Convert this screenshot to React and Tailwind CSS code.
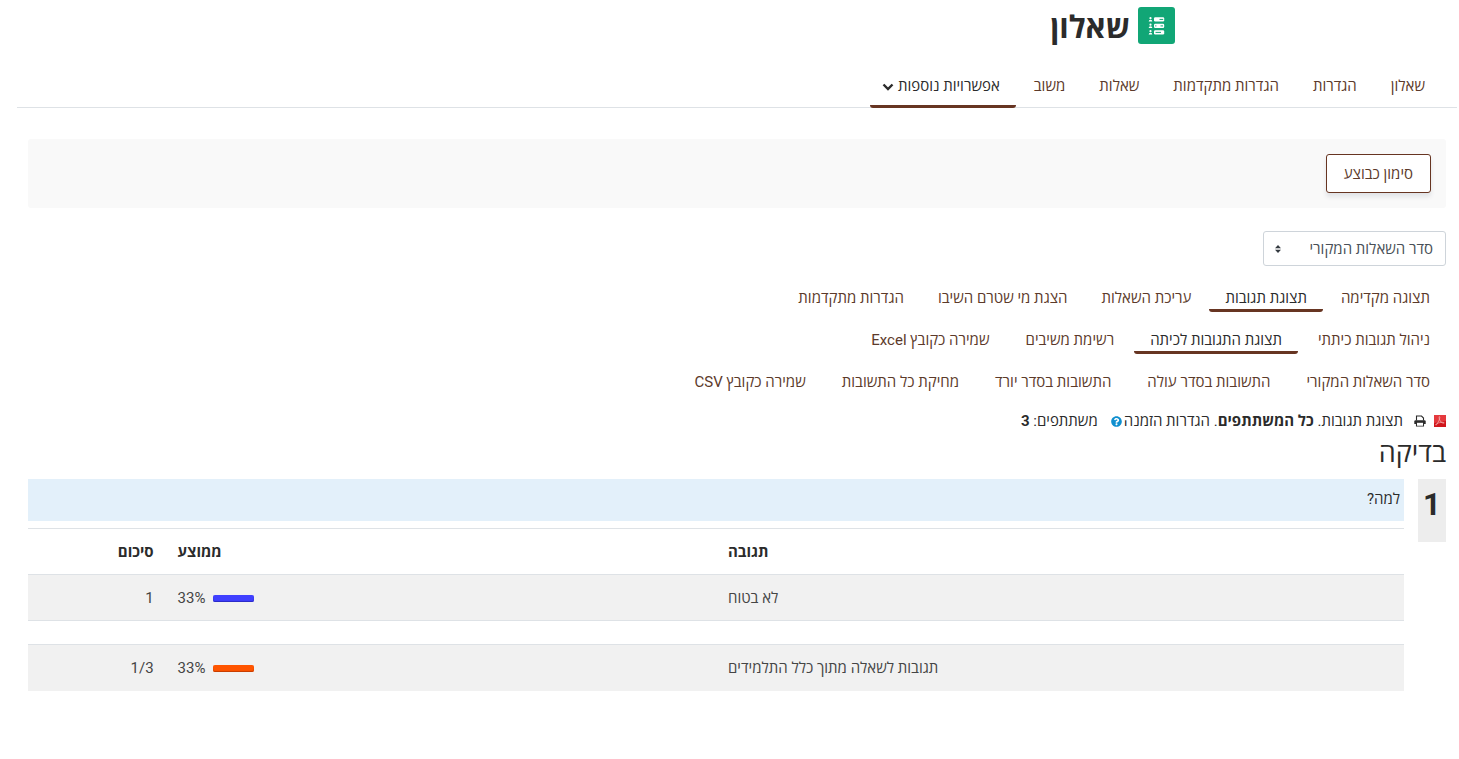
import { FaQuestionCircle } from "react-icons/fa"

const mainTabs = ["שאלון", "הגדרות", "הגדרות מתקדמות", "שאלות", "משוב", "אפשרויות נוספות"]

const subTabs = [
  {
    active: 1,
    gap: "gap-x-0.5",
    items: ["תצוגה מקדימה", "תצוגת תגובות", "עריכת השאלות", "הצגת מי שטרם השיבו", "הגדרות מתקדמות"],
  },
  {
    active: 1,
    gap: "gap-x-1",
    items: ["ניהול תגובות כיתתי", "תצוגת התגובות לכיתה", "רשימת משיבים", "שמירה כקובץ Excel"],
  },
  {
    active: -1,
    gap: "gap-x-1",
    items: [
      "סדר השאלות המקורי",
      "התשובות בסדר עולה",
      "התשובות בסדר יורד",
      "מחיקת כל התשובות",
      "שמירה כקובץ CSV",
    ],
  },
]

function SurveyIcon() {
  return (
    <svg viewBox="0 0 37 37" className="h-[37px] w-[37px] rounded-[3px] bg-[#11a676]" aria-hidden="true">
      {[10, 16.5, 23].map((y) => (
        <g key={y} fill="#fff">
          <circle cx="12.5" cy={y + 1.2} r="1.1" />
          <path d={`M10.7 ${y + 4.6}q0-1.9 1.8-1.9t1.8 1.9z`} />
          <rect x="16" y={y + 0.3} width="10.2" height="4.2" rx="1.2" />
        </g>
      ))}
      <path d="M21.5 12.4h3.7M17.2 18.9h1.2M22.5 18.9h2.5M17.5 25.4h5.5" stroke="#11a676" strokeWidth="1" />
    </svg>
  )
}

function PdfIcon() {
  return (
    <svg viewBox="0 0 12 12" className="h-3 w-3" aria-hidden="true">
      <rect width="12" height="12" fill="#d0161c" />
      <path d="M0 0h12v6L0 8z" fill="#e5393d" />
      <path
        d="M5.3 1.5c1.2 0 .2 4-2.8 8.3-.9.8-1.3-.2.3-1.2 2.2-1.1 6.5-1.8 7.4-.8.4 1-3.3.3-4.5-2.7-.4-1.3-.9-3.4-.4-3.6z"
        fill="none"
        stroke="#f7c4c4"
        strokeWidth=".6"
      />
    </svg>
  )
}

function PrintIcon() {
  return (
    <svg viewBox="0 0 12 12" className="h-3 w-3" aria-hidden="true">
      <path d="M2.5 5.500V1h5l2 2v2.500M2.500 8v3h7V8" fill="none" stroke="#2b2b2b" strokeWidth="1.1" />
      <path d="M1.500 5.200h9q1.200 0 1.200 1.200V9H.3V6.400Q.3 5.200 1.500 5.200z" fill="#2b2b2b" />
      <path d="M3 7.800h6v2.700H3z" fill="#fff" />
    </svg>
  )
}

function ChevronIcon() {
  return (
    <svg viewBox="0 0 12 8" className="mt-0.5 h-2 w-3" aria-hidden="true">
      <path d="M1.500 1.500L6 6l4.500-4.500" fill="none" stroke="#2b2b2b" strokeWidth="2.400" />
    </svg>
  )
}

function SortArrows() {
  return (
    <svg viewBox="0 0 6 8" className="h-2 w-1.5" aria-hidden="true">
      <path d="M3 0l3 3.300H0zM3 8L0 4.700h6z" fill="#343a40" />
    </svg>
  )
}

function Bar({ className }) {
  return <span className={`inline-block h-[7px] w-[41px] rounded-[2px] align-middle ${className}`} />
}

function SubNav({ items, active, gap }) {
  return (
    <ul className={`flex flex-wrap ${gap}`}>
      {items.map((item, i) => (
        <li key={item}>
          <a
            href="#"
            className={`block h-[34px] rounded-[3px] border-b-[3px] px-4 pt-[9px] leading-[22px] whitespace-nowrap ${
              i === active ? "border-[#673522] text-[#2b2b2b]" : "border-transparent text-[#5c3a2a]"
            }`}
          >
            {item}
          </a>
        </li>
      ))}
    </ul>
  )
}

function App() {
  return (
    <div
      dir="rtl"
      className="bg-white font-[Roboto,'Open_Sans','Noto_Sans',sans-serif] text-[15px] leading-[22px] text-[#2b2b2b]"
    >
      <header className="flex items-center gap-2 pt-[7px] pr-71">
        <SurveyIcon />
        <h1 className="pt-1 text-[31px] leading-[33px] font-bold">שאלון</h1>
      </header>

      <nav className="mr-0.5 ml-[17px] mt-5 border-b border-[#dee2e6] pr-4">
        <ul className="flex gap-0.5">
          {mainTabs.map((tab, i) => (
            <li key={tab}>
              <a
                href="#"
                className={`-mb-px flex h-[44px] items-center gap-1 rounded-[3px] border-b-[3px] pt-[3px] pr-4 whitespace-nowrap ${
                  i === 5 ? "border-[#673522] pl-3 text-[#2b2b2b]" : "border-transparent pl-4 text-[#5c3a2a]"
                }`}
              >
                {tab}
                {i === 5 && <ChevronIcon />}
              </a>
            </li>
          ))}
        </ul>
      </nav>

      <main className="mt-[31px] pr-[13px] pl-7">
        <div className="rounded-[3px] bg-[#f9f9f9] p-[15px]">
          <button
            type="button"
            className="block h-[39px] rounded-[3px] border border-[#673522] bg-white px-[17px] text-[#5c3a2a] shadow-[0_4px_4px_#e2e4e7]"
          >
            סימון כבוצע
          </button>
        </div>

        <div className="relative mt-[23px] h-[35px] w-[183px]">
          <select
            aria-label="סדר השאלות"
            className="h-full w-full appearance-none rounded-[3px] border border-[#ced4da] bg-white pr-3 pl-6 text-[#495057]"
          >
            <option>סדר השאלות המקורי</option>
            <option>התשובות בסדר עולה</option>
            <option>התשובות בסדר יורד</option>
          </select>
          <div className="pointer-events-none absolute inset-y-0 left-3 flex items-center">
            <SortArrows />
          </div>
        </div>

        <nav className="mt-3 flex flex-col gap-2">
          {subTabs.map((row) => (
            <SubNav key={row.items[0]} items={row.items} active={row.active} gap={row.gap} />
          ))}
        </nav>

        <div className="mt-3.5 flex items-center whitespace-nowrap">
          <a href="#" aria-label="PDF" className="ml-2">
            <PdfIcon />
          </a>
          <a href="#" aria-label="הדפסה" className="ml-[11px]">
            <PrintIcon />
          </a>
          <p>
            תצוגת תגובות. <b>כל המשתתפים</b>. הגדרות הזמנה
          </p>
          <button type="button" aria-label="עזרה" className="mr-0.5 ml-[13px] text-[#0f8fcf]">
            <FaQuestionCircle className="h-[11px] w-[11px]" />
          </button>
          <p>
            משתתפים: <b>3</b>
          </p>
        </div>

        <h2 className="mt-1 text-[27px] leading-[34px]">בדיקה</h2>

        <section className="mt-[9px] flex items-start gap-3.5">
          <h3 className="h-[63px] w-7 shrink-0 bg-[#ededed] pt-2 text-center text-[31px] leading-[36px] font-bold">1</h3>
          <div className="grow">
            <p className="h-[42px] bg-[#e3f0fa] px-1 pt-[9px]">למה?</p>
            <table className="mt-[7px] w-full table-fixed border-collapse">
              <thead>
                <tr className="h-[46px] border-t border-[#dee2e6]">
                  <th className="w-1/2 px-3 text-left font-bold">תגובה</th>
                  <th className="w-2/5 px-3 text-left font-bold">ממוצע</th>
                  <th className="w-1/10 px-3 text-right font-bold">סיכום</th>
                </tr>
              </thead>
              <tbody className="text-[#454545]">
                <tr className="h-[46px] border-y border-[#dee2e6] bg-[#f1f1f1]">
                  <td className="px-3 text-left">לא בטוח</td>
                  <td className="px-3 text-left">
                    <Bar className="ml-2 bg-[#4040ff] shadow-[inset_0_-1px_1px_#2a2ac4]" />
                    <span dir="ltr">33%</span>
                  </td>
                  <td className="px-3 text-right">1</td>
                </tr>
                <tr className="h-6">
                  <td colSpan={3} />
                </tr>
                <tr className="h-[46px] border-t border-[#dee2e6] bg-[#f1f1f1]">
                  <td className="px-3 text-left">תגובות לשאלה מתוך כלל התלמידים</td>
                  <td className="px-3 text-left">
                    <Bar className="ml-2 bg-[#ff5500] shadow-[inset_0_-1px_1px_#c43c00]" />
                    <span dir="ltr">33%</span>
                  </td>
                  <td className="px-3 text-right">
                    <span dir="ltr">1/3</span>
                  </td>
                </tr>
              </tbody>
            </table>
          </div>
        </section>
      </main>
    </div>
  )
}

export default App
